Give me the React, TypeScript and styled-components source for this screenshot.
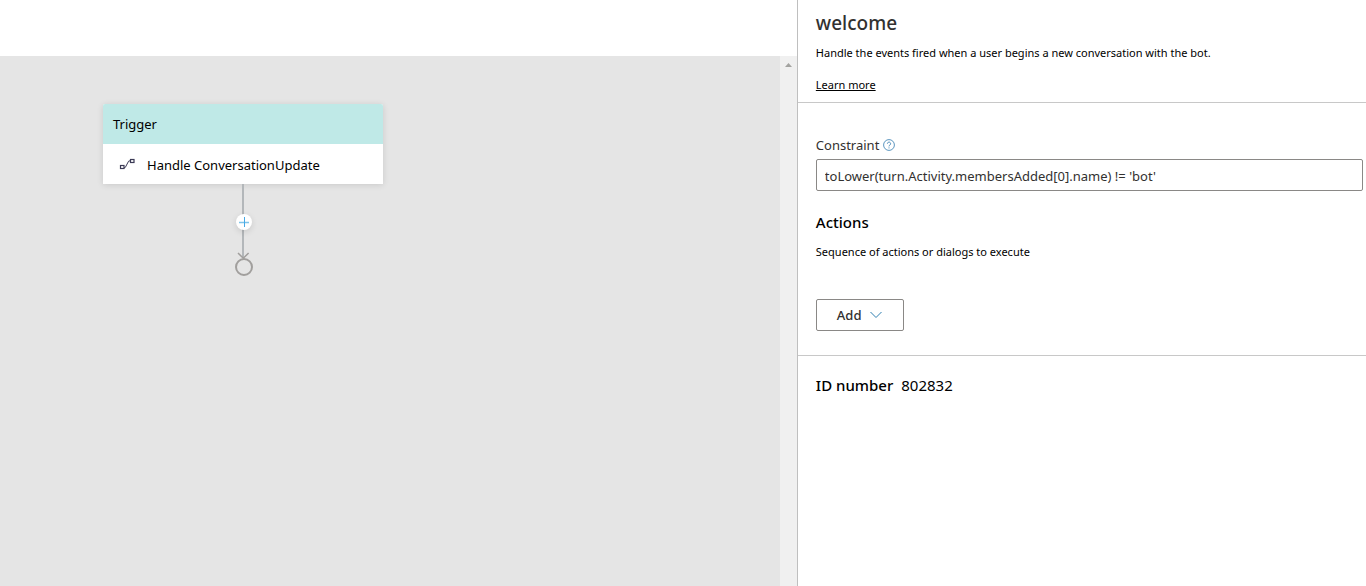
import React from "react";
import styled, { createGlobalStyle } from "styled-components";

const GlobalStyle = createGlobalStyle`
  *, *::before, *::after { box-sizing: border-box; }
  body {
    margin: 0;
    background: #fff;
    color: #000;
    font-family: "Noto Sans", "Open Sans", sans-serif;
    font-size: 14px;
    line-height: 20px;
  }
  h1, h2, h3, p, dl, dt, dd { margin: 0; }
  button, input { font: inherit; color: inherit; }
`;

const Page = styled.div`
  display: grid;
  grid-template-columns: minmax(0, 7fr) minmax(0, 5fr);
  min-height: 100vh;
`;

const Editor = styled.main`
  display: flex;
  flex-direction: column;
`;

const Toolbar = styled.header`
  height: 56px;
  background: #fff;
`;

const CanvasArea = styled.div`
  flex: 1;
  display: flex;
  background: #e5e5e5;
`;

const Canvas = styled.section`
  flex: 1;
  padding: 48px 0 0 103px;
`;

const ScrollTrack = styled.div`
  width: 17px;
  padding-top: 7px;
  display: flex;
  justify-content: center;
  background: #f0f0f0;
`;

const Flow = styled.div`
  width: 280px;
  display: flex;
  flex-direction: column;
  align-items: center;
`;

const NodeCard = styled.article`
  width: 100%;
  border-radius: 2px 2px 0 0;
  background: #fff;
  box-shadow: 0 1px 6px rgba(0, 0, 0, 0.12);
`;

const NodeTitle = styled.h2`
  height: 40px;
  padding: 0 10px;
  border-radius: 2px 2px 0 0;
  background: #bfe9e7;
  font-size: 13px;
  font-weight: 400;
  line-height: 40px;
`;

const NodeBody = styled.div`
  height: 40px;
  padding: 2px 16px 0;
  display: flex;
  align-items: center;
  gap: 12px;
  font-size: 13px;

  svg { margin-top: -2px; }
`;

const Connector = styled.div`
  position: relative;
  height: 92px;

  > svg { display: block; }
`;

const InsertButton = styled.button`
  position: absolute;
  top: 30px;
  left: 3px;
  width: 16px;
  height: 16px;
  padding: 0;
  border: 0;
  border-radius: 50%;
  background: #fff;
  box-shadow: 0 2px 6px rgba(0, 0, 0, 0.12);

  svg { display: block; }
`;

const Properties = styled.aside`
  border-left: 1px solid #bfbfbf;
`;

const Section = styled.section<{ $top: number; $bottom: number; $right?: number }>`
  padding: ${(p) => `${p.$top}px ${p.$right ?? 18}px ${p.$bottom}px 18px`};

  & + & { border-top: 1px solid #c8c8c8; }
`;

const Title = styled.h1`
  color: #323130;
  font-size: 19px;
  font-weight: 500;
  line-height: 28px;
`;

const Text = styled.p<{ $gap: number }>`
  margin-top: ${(p) => p.$gap}px;
  font-size: 11px;
  line-height: 16px;
`;

const Link = styled.a`
  color: #000;
  text-decoration: underline;
`;

const LabelRow = styled.div`
  display: flex;
  align-items: center;
  gap: 4px;
  padding-bottom: 4px;
`;

const Label = styled.label`
  color: #323130;
  font-size: 13px;
`;

const TextBox = styled.input`
  display: block;
  width: 100%;
  height: 32px;
  padding: 2px 8px 0;
  border: 1px solid #8a8886;
  border-radius: 2px;
  background: #fff;
  color: #323130;
  font-size: 13px;
  outline: 0;
`;

const Heading = styled.h2`
  margin-top: 21px;
  font-size: 15px;
  font-weight: 500;
`;

const AddButton = styled.button`
  display: flex;
  align-items: center;
  gap: 9px;
  width: 88px;
  height: 32px;
  margin-top: 39px;
  padding: 0 20px;
  border: 1px solid #8a8886;
  border-radius: 2px;
  background: #fff;
  color: #323130;
  font-size: 13px;
  font-weight: 500;

  svg { flex: none; }
`;

const IdRow = styled.dl`
  display: flex;
  gap: 8px;
  font-size: 15px;

  dt { font-weight: 500; }
`;

const EventIcon = () => (
  <svg width="16" height="16" viewBox="0 0 16 16" fill="none" stroke="#3b3a55" aria-hidden="true">
    <rect x="1.5" y="9.5" width="3.5" height="3" strokeWidth="1.2" />
    <rect x="11.5" y="3.5" width="3.5" height="3" strokeWidth="1.2" />
    <path d="M5 11.8L6.3 11.4L9.6 5.2L11.5 4.6" />
  </svg>
);

const HelpIcon = () => (
  <svg width="12" height="12" viewBox="0 0 12 12" fill="none" stroke="#4a8ab8" aria-hidden="true">
    <circle cx="6" cy="6" r="5.4" strokeWidth="0.9" />
    <path d="M4.4 4.7a1.6 1.6 0 1 1 2.5 1.3Q6 6.5 6 7.4" />
    <path d="M6 8.4v1" />
  </svg>
);

export default function App() {
  return (
    <>
      <GlobalStyle />
      <Page>
        <Editor>
          <Toolbar />
          <CanvasArea>
            <Canvas>
              <Flow>
                <NodeCard>
                  <NodeTitle>Trigger</NodeTitle>
                  <NodeBody>
                    <EventIcon />
                    <span>Handle ConversationUpdate</span>
                  </NodeBody>
                </NodeCard>
                <Connector>
                  <svg width="20" height="92" viewBox="0 0 20 92" fill="none" aria-hidden="true">
                    <path d="M10 0V74" stroke="#b3b7ba" strokeWidth="2" />
                    <path d="M5 69L10.3 74.3L15.6 69" stroke="#a19f9d" strokeWidth="1.5" />
                    <circle cx="11" cy="83" r="8" stroke="#a19f9d" strokeWidth="2" />
                  </svg>
                  <InsertButton type="button" aria-label="Insert action">
                    <svg width="16" height="16" viewBox="0 0 16 16" aria-hidden="true">
                      <path d="M3 8.5H13" stroke="#7fc4ea" strokeWidth="1.5" />
                      <path d="M8.5 3V13" stroke="#45a9e6" />
                    </svg>
                  </InsertButton>
                </Connector>
              </Flow>
            </Canvas>
            <ScrollTrack>
              <svg width="7" height="4" viewBox="0 0 7 4" aria-hidden="true">
                <path d="M0 4L3.5 0L7 4Z" fill="#a3a3a0" />
              </svg>
            </ScrollTrack>
          </CanvasArea>
        </Editor>
        <Properties>
          <Section $top={9} $bottom={9}>
            <Title>welcome</Title>
            <Text $gap={8}>Handle the events fired when a user begins a new conversation with the bot.</Text>
            <Text $gap={16}>
              <Link href="#learn-more">Learn more</Link>
            </Text>
          </Section>
          <Section $top={32} $bottom={24} $right={3}>
            <LabelRow>
              <Label htmlFor="constraint">Constraint</Label>
              <HelpIcon />
            </LabelRow>
            <TextBox
              id="constraint"
              type="text"
              spellCheck={false}
              defaultValue="toLower(turn.Activity.membersAdded[0].name) != 'bot'"
            />
            <Heading>Actions</Heading>
            <Text $gap={12}>Sequence of actions or dialogs to execute</Text>
            <AddButton type="button">
              Add
              <svg width="12" height="8" viewBox="0 0 12 8" fill="none" stroke="#2f7fb0" aria-hidden="true">
                <path d="M0.5 1L6 6.5L11.5 1" />
              </svg>
            </AddButton>
          </Section>
          <Section $top={19} $bottom={20}>
            <IdRow>
              <dt>ID number</dt>
              <dd>802832</dd>
            </IdRow>
          </Section>
        </Properties>
      </Page>
    </>
  );
}
